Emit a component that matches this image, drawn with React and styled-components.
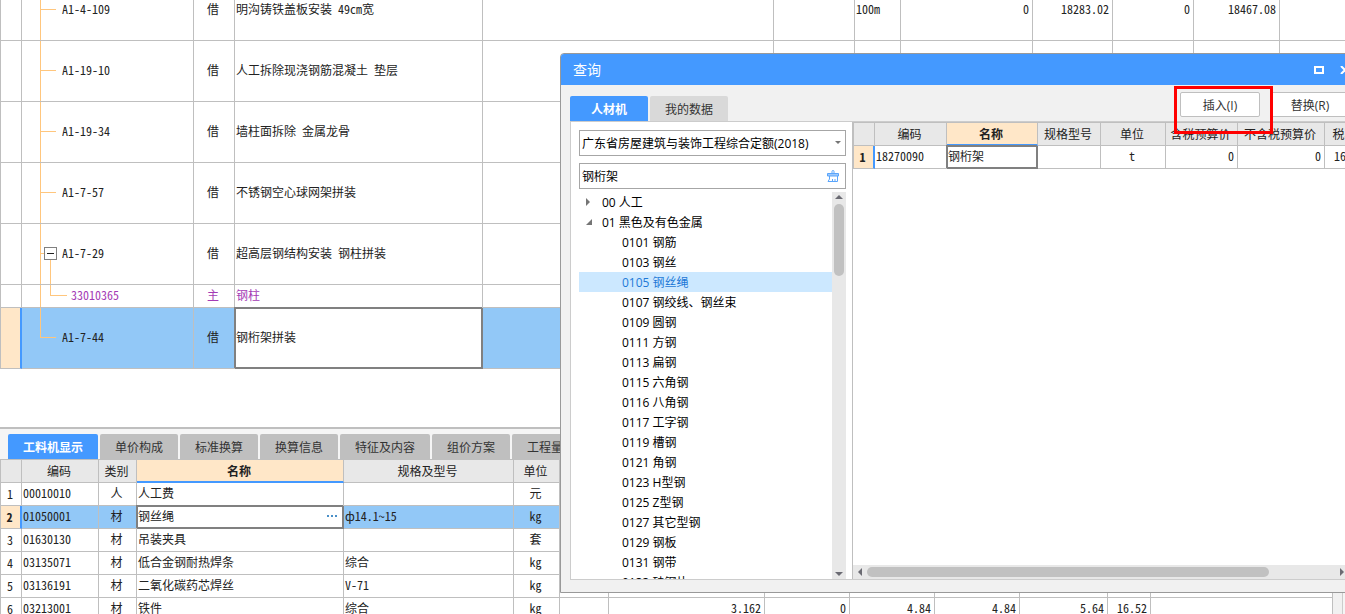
import React from "react";
import styled, { createGlobalStyle } from "styled-components";

const GlobalStyle = createGlobalStyle`
  *, *::after {
    box-sizing: border-box;
  }
  body {
    margin: 0;
    font-family: "Open Sans", "Noto Sans CJK SC", sans-serif;
    font-size: 12px;
    color: #222;
    background: #fff;
  }
  button, input, select {
    margin: 0;
    font: inherit;
    color: inherit;
  }
`;

const Page = styled.div`
  position: relative;
  display: flex;
  flex-direction: column;
  height: 100vh;
  overflow: hidden;
`;
const MainPane = styled.main`
  flex: 1;
  min-height: 0;
  overflow: hidden;
`;

/* grid */
const Grid = styled.table`
  width: ${(props) => props.$width || "100%"};
  margin-top: ${(props) => (props.$scrolled ? "-20px" : "0")};
  table-layout: fixed;
  border-collapse: separate;
  border-spacing: 0;
  font-family: "Noto Sans CJK SC", sans-serif;
  font-feature-settings: "hwid" 1;
  line-height: 18px;
`;
const Col = styled.col`
  width: ${(props) => (props.$w ? `${props.$w}px` : "auto")};
`;
const Row = styled.tr`
  height: ${(props) => (props.$tall ? "61px" : "23px")};
  color: ${(props) => (props.$material ? "#a43bb5" : "#222")};
  background: ${(props) => (props.$selected ? "#92c8f7" : "#fff")};
`;
const HeadCell = styled.th`
  height: 24px;
  padding: 0 2px 0 0;
  border-top: 1px solid #bfbfbf;
  border-right: 1px solid #bfbfbf;
  border-bottom: ${(props) =>
    props.$active ? "2px solid #4499ff" : "1px solid #bfbfbf"};
  background: ${(props) => (props.$active ? "#ffe7c8" : "#e8e8e8")};
  font-weight: ${(props) => (props.$active ? 700 : 400)};
  white-space: nowrap;
  overflow: hidden;

  &:first-child {
    border-left: 1px solid #bfbfbf;
  }
`;
const Cell = styled.td`
  padding: ${(props) => (props.$flush ? "0" : "0 3px 2px 1px")};
  border-right: 1px solid #bfbfbf;
  border-bottom: 1px solid #bfbfbf;
  text-align: ${(props) => props.$align || "left"};
  white-space: nowrap;
  overflow: hidden;

  &:last-child {
    border-right: 0;
  }
`;
const IndexCell = styled.th`
  padding: 0 2px 0 0;
  border-left: 1px solid #bfbfbf;
  border-bottom: 1px solid #bfbfbf;
  border-right: ${(props) =>
    props.$selected ? "2px solid #4499ff" : "1px solid #bfbfbf"};
  background: ${(props) => (props.$selected ? "#ffe7c8" : "#fff")};
  font-weight: ${(props) => (props.$selected ? 700 : 400)};
  text-align: center;
`;
const EditCell = styled.td`
  padding: 0 3px 2px 1px;
  background: #fff;
  border-right: 1px solid #808080;
  border-bottom: 1px solid #808080;
  box-shadow: -1px -1px 0 #808080, inset 0 0 0 1px #808080;
`;
const EditBox = styled.div`
  display: flex;
  align-items: center;
`;
const EditInput = styled.input`
  flex: 1;
  min-width: 0;
  height: 18px;
  padding: 0;
  border: 0;
  outline: 0;
  background: transparent;
`;
const MoreButton = styled.button`
  display: flex;
  align-items: center;
  width: 14px;
  height: 16px;
  padding: 0 1px;
  border: 0;
  background: transparent;
`;

/* tree lines inside the code column */
const CodeBox = styled.div`
  display: flex;
  align-items: center;
  height: ${(props) => (props.$tall ? "60px" : "22px")};
  padding-left: 18px;
`;
const CodeLabel = styled.span`
  padding-bottom: 2px;
`;
const line = "linear-gradient(#ffc67d, #ffc67d)";
const middle = "calc(50% - 1px)";
const Guide = styled.span`
  flex: none;
  align-self: stretch;
  display: flex;
  align-items: center;
  width: ${(props) => (props.$branch === "child" ? "10px" : "22px")};
  padding-bottom: 2px;
  background: ${(props) =>
    ({
      item: `${line} 0 0 / 1px 100% no-repeat, ${line} 0 ${middle} / 16px 1px no-repeat`,
      last: `${line} 0 0 / 1px 50% no-repeat, ${line} 0 ${middle} / 16px 1px no-repeat`,
      child: `${line} 0 0 / 1px 100% no-repeat`,
      parent: `${line} 0 0 / 1px 100% no-repeat, ${line} 0 ${middle} / 4px 1px no-repeat, ${line} 10px 100% / 1px 25px no-repeat`,
    })[props.$branch]};
`;
const SubGuide = styled.span`
  flex: none;
  align-self: stretch;
  width: 21px;
  background: ${line} 0 0 / 1px 50% no-repeat,
    ${line} 0 ${middle} / 17px 1px no-repeat;
`;
const Toggle = styled.button`
  display: flex;
  align-items: center;
  justify-content: center;
  width: 13px;
  height: 13px;
  margin-left: 4px;
  padding: 0;
  border: 1px solid #808080;
  background: #fff;
`;

/* lower pane */
const DetailPane = styled.section`
  flex: none;
  height: 187px;
  border-top: 2px solid #bfbfbf;
  background: #f5f5f5;
  overflow: hidden;
`;
const DetailTabs = styled.div`
  display: flex;
  gap: 2px;
  height: 30px;
  padding: 5px 8px 0;
`;
const Tab = styled.button`
  flex: none;
  height: 25px;
  padding: 0 15px;
  border: 0;
  border-radius: 2px 2px 0 0;
  background: ${(props) =>
    props.$active ? "#4499ff" : props.$light ? "#d9d9d9" : "#bfbfbf"};
  color: ${(props) => (props.$active ? "#fff" : "#333")};
  font-weight: ${(props) => (props.$active ? 700 : 400)};
  white-space: nowrap;
`;
const DialogTab = styled(Tab)`
  width: 78px;
  padding: 0;
`;
const DetailBody = styled.div`
  display: flex;
`;
const GutterBar = styled.div`
  flex: none;
  width: 11px;
  margin-right: 2px;
  border-left: 1px solid #bfbfbf;
  border-right: 1px solid #ccc;
  background: #f1f1f1;
`;

/* query dialog */
const Dialog = styled.section`
  position: absolute;
  top: 53px;
  bottom: 21px;
  left: 560px;
  right: -15px;
  display: flex;
  flex-direction: column;
  border: 1px solid #999;
  border-radius: 4px 4px 0 0;
  background: #f1f1f1;
  overflow: hidden;
`;
const TitleBar = styled.header`
  flex: none;
  display: flex;
  align-items: center;
  gap: 16px;
  height: 31px;
  padding: 0 9px 0 12px;
  background: #4499ff;
  color: #fff;
`;
const Title = styled.h1`
  flex: 1;
  margin: 0;
  font-size: 14px;
  line-height: 20px;
  font-weight: 400;
`;
const WindowButton = styled.button`
  display: flex;
  padding: 0;
  border: 0;
  background: transparent;
`;
const DialogBar = styled.div`
  flex: none;
  display: flex;
  align-items: flex-end;
  gap: 2px;
  height: 36px;
  padding: 0 9px;
`;
const Actions = styled.div`
  display: flex;
  gap: 10px;
  margin-left: auto;
  padding-bottom: 4px;
`;
const ActionButton = styled.button`
  width: 80px;
  height: 25px;
  padding: 0;
  border: 1px solid #bfbfbf;
  border-radius: 2px;
  background: #fff;
  color: #333;
`;
const Highlighted = styled.div`
  position: relative;
  height: 25px;

  &::after {
    content: "";
    position: absolute;
    z-index: 1;
    top: -6px;
    left: -6px;
    width: 99px;
    height: 48px;
    border: 3px solid #f00;
    pointer-events: none;
  }
`;
const DialogBody = styled.div`
  flex: 1;
  min-height: 0;
  display: flex;
  margin: 0 9px 12px;
  border: 1px solid #ccc;
  background: #fff;
`;
const TreePane = styled.aside`
  flex: none;
  display: flex;
  flex-direction: column;
  width: 282px;
  padding: 8px 6px 0 8px;
  border-right: 1px solid #bfbfbf;
  color: #000;
`;
const SelectBox = styled.div`
  display: grid;
  align-items: center;
  margin-bottom: 7px;

  > * {
    grid-area: 1 / 1;
  }
  svg {
    justify-self: end;
    margin-right: 5px;
    pointer-events: none;
  }
`;
const LibrarySelect = styled.select`
  appearance: none;
  width: 100%;
  height: 26px;
  padding: 0 20px 0 2px;
  border: 1px solid #a6a6a6;
  border-radius: 0;
  background: #fff;
`;
const SearchBox = styled.div`
  flex: none;
  display: flex;
  align-items: center;
  height: 26px;
  margin-bottom: 3px;
  padding: 0 6px 0 2px;
  border: 1px solid #a6a6a6;
`;
const TreeScroll = styled.div`
  flex: 1;
  min-height: 0;
  display: flex;
`;
const Tree = styled.ul`
  flex: 1;
  margin: 0;
  padding: 0;
  list-style: none;
  overflow: hidden;
`;
const TreeItem = styled.li`
  display: flex;
  align-items: center;
  height: 20px;
  padding-left: ${(props) => (props.$child ? "43px" : "6px")};
  background: ${(props) => (props.$selected ? "#cce8ff" : "transparent")};
  color: ${(props) => (props.$selected ? "#1e78d7" : "#000")};
  white-space: nowrap;
`;
const TreeArrow = styled.svg`
  width: 8px;
  height: 8px;
  margin-right: 9px;
  fill: #757575;
`;
const VerticalBar = styled.div`
  flex: none;
  display: flex;
  flex-direction: column;
  justify-content: space-between;
  align-items: center;
  width: 14px;
  background: #e8e8e8;
`;
const HorizontalBar = styled.div`
  flex: none;
  display: flex;
  justify-content: space-between;
  align-items: center;
  height: 14px;
  background: #e8e8e8;
`;
const ScrollArrow = styled.svg`
  flex: none;
  width: ${(props) => (props.$wide ? "14px" : "12px")};
  height: 12px;
  fill: #6b6b73;
`;
const VerticalThumb = styled.div`
  width: 10px;
  height: 72px;
  margin-bottom: auto;
  border-radius: 5px;
  background: #c1c1c1;
`;
const HorizontalThumb = styled.div`
  width: 81%;
  height: 10px;
  margin-right: auto;
  border-radius: 5px;
  background: #c1c1c1;
`;
const ResultPane = styled.div`
  flex: 1;
  min-width: 0;
  display: flex;
  flex-direction: column;
`;
const ResultScroll = styled.div`
  flex: 1;
  min-height: 0;
  overflow: hidden;
`;

const quotaColumns = [22, 172, 41, 248, 291, 81, 46, 132, 80, 81, 86, 0];
const quotas = [
  {
    code: "A1-4-109",
    type: "借",
    name: "明沟铸铁盖板安装 49cm宽",
    unit: "100m",
    values: ["0", "18283.02", "0", "18467.08"],
    branch: "item",
  },
  { code: "A1-19-10", type: "借", name: "人工拆除现浇钢筋混凝土 垫层", branch: "item" },
  { code: "A1-19-34", type: "借", name: "墙柱面拆除 金属龙骨", branch: "item" },
  { code: "A1-7-57", type: "借", name: "不锈钢空心球网架拼装", branch: "item" },
  { code: "A1-7-29", type: "借", name: "超高层钢结构安装 钢柱拼装", branch: "parent" },
  { code: "33010365", type: "主", name: "钢柱", branch: "child" },
  { code: "A1-7-44", type: "借", name: "钢桁架拼装", branch: "last", selected: true },
];

const detailTabs = [
  "工料机显示",
  "单价构成",
  "标准换算",
  "换算信息",
  "特征及内容",
  "组价方案",
  "工程量明细",
];
const detailColumns = [22, 77, 38, 207, 170, 46, 49, 156, 85, 85, 85, 88, 43, 0];
const detailHeads = ["", "编码", "类别", "名称", "规格及型号", "单位"];
const details = [
  { code: "00010010", type: "人", name: "人工费", spec: "", unit: "元" },
  { code: "01050001", type: "材", name: "钢丝绳", spec: "ф14.1~15", unit: "kg", selected: true },
  { code: "01630130", type: "材", name: "吊装夹具", spec: "", unit: "套" },
  { code: "03135071", type: "材", name: "低合金钢耐热焊条", spec: "综合", unit: "kg" },
  { code: "03136191", type: "材", name: "二氧化碳药芯焊丝", spec: "V-71", unit: "kg" },
  {
    code: "03213001",
    type: "材",
    name: "铁件",
    spec: "综合",
    unit: "kg",
    values: ["", "3.162", "0", "4.84", "4.84", "5.64", "16.52", ""],
  },
];

const treeItems = [
  "0101 钢筋",
  "0103 钢丝",
  "0105 钢丝绳",
  "0107 钢绞线、钢丝束",
  "0109 圆钢",
  "0111 方钢",
  "0113 扁钢",
  "0115 六角钢",
  "0116 八角钢",
  "0117 工字钢",
  "0119 槽钢",
  "0121 角钢",
  "0123 H型钢",
  "0125 Z型钢",
  "0127 其它型钢",
  "0129 钢板",
  "0131 钢带",
  "0133 硅钢片",
];

const resultColumns = [22, 72, 91, 63, 65, 72, 87, 42];
const resultHeads = [
  "",
  "编码",
  "名称",
  "规格型号",
  "单位",
  "含税预算价",
  "不含税预算价",
  "税率",
];

const Columns = ({ widths }) => (
  <colgroup>
    {widths.map((w, i) => (
      <Col key={i} $w={w} />
    ))}
  </colgroup>
);

const QuotaCode = ({ quota }) => (
  <CodeBox $tall={quota.branch !== "child"}>
    <Guide $branch={quota.branch}>
      {quota.branch === "parent" && (
        <Toggle aria-label="折叠">
          <svg width="7" height="1">
            <rect width="7" height="1" fill="#222" />
          </svg>
        </Toggle>
      )}
    </Guide>
    {quota.branch === "child" && <SubGuide />}
    <CodeLabel>{quota.code}</CodeLabel>
  </CodeBox>
);

const QuotaGrid = () => (
  <Grid $scrolled>
    <Columns widths={quotaColumns} />
    <tbody>
      {quotas.map((quota) => (
        <Row
          key={quota.code}
          $tall={quota.branch !== "child"}
          $material={quota.branch === "child"}
          $selected={quota.selected}
        >
          <IndexCell $selected={quota.selected} />
          <Cell $flush>
            <QuotaCode quota={quota} />
          </Cell>
          <Cell $align="center">{quota.type}</Cell>
          {quota.selected ? (
            <EditCell>
              <EditBox>
                <EditInput aria-label="名称" defaultValue={quota.name} />
              </EditBox>
            </EditCell>
          ) : (
            <Cell>{quota.name}</Cell>
          )}
          <Cell />
          <Cell />
          <Cell>{quota.unit}</Cell>
          {(quota.values || ["", "", "", ""]).map((value, i) => (
            <Cell key={i} $align="right">
              {value}
            </Cell>
          ))}
          <Cell />
        </Row>
      ))}
    </tbody>
  </Grid>
);

const DetailGrid = () => (
  <Grid>
    <Columns widths={detailColumns} />
    <thead>
      <tr>
        {detailColumns.map((w, i) => (
          <HeadCell key={i} $active={detailHeads[i] === "名称"}>
            {detailHeads[i]}
          </HeadCell>
        ))}
      </tr>
    </thead>
    <tbody>
      {details.map((item, index) => (
        <Row key={item.code} $selected={item.selected}>
          <IndexCell $selected={item.selected}>{index + 1}</IndexCell>
          <Cell>{item.code}</Cell>
          <Cell $align="center">{item.type}</Cell>
          {item.selected ? (
            <EditCell>
              <EditBox>
                <EditInput aria-label="名称" defaultValue={item.name} />
                <MoreButton aria-label="更多">
                  <svg width="12" height="2" fill="#4a90c8">
                    <rect width="2" height="2" />
                    <rect x="4" width="2" height="2" />
                    <rect x="8" width="2" height="2" />
                  </svg>
                </MoreButton>
              </EditBox>
            </EditCell>
          ) : (
            <Cell>{item.name}</Cell>
          )}
          <Cell>{item.spec}</Cell>
          <Cell $align="center">{item.unit}</Cell>
          {(item.values || Array(8).fill("")).map((value, i) => (
            <Cell key={i} $align="right">
              {value}
            </Cell>
          ))}
        </Row>
      ))}
    </tbody>
  </Grid>
);

const ResultGrid = () => (
  <Grid $width="514px">
    <Columns widths={resultColumns} />
    <thead>
      <tr>
        {resultHeads.map((head, i) => (
          <HeadCell key={i} $active={head === "名称"}>
            {head}
          </HeadCell>
        ))}
      </tr>
    </thead>
    <tbody>
      <Row>
        <IndexCell $selected>1</IndexCell>
        <Cell>18270090</Cell>
        <EditCell>
          <EditBox>
            <EditInput aria-label="名称" defaultValue="钢桁架" />
          </EditBox>
        </EditCell>
        <Cell />
        <Cell $align="center">t</Cell>
        <Cell $align="right">0</Cell>
        <Cell $align="right">0</Cell>
        <Cell $align="right">16.93</Cell>
      </Row>
    </tbody>
  </Grid>
);

const MaterialTree = () => (
  <TreeScroll>
    <Tree>
      <TreeItem>
        <TreeArrow viewBox="0 0 8 8">
          <path d="M1 0v8l4-4z" />
        </TreeArrow>
        00 人工
      </TreeItem>
      <TreeItem>
        <TreeArrow viewBox="0 0 8 8">
          <path d="M7 1v6H1z" />
        </TreeArrow>
        01 黑色及有色金属
      </TreeItem>
      {treeItems.map((item) => (
        <TreeItem key={item} $child $selected={item.startsWith("0105")}>
          {item}
        </TreeItem>
      ))}
    </Tree>
    <VerticalBar>
      <ScrollArrow viewBox="0 0 12 12">
        <path d="M2 7l4-4 4 4z" />
      </ScrollArrow>
      <VerticalThumb />
      <ScrollArrow viewBox="0 0 12 12">
        <path d="M2 5l4 4 4-4z" />
      </ScrollArrow>
    </VerticalBar>
  </TreeScroll>
);

const QueryDialog = () => (
  <Dialog role="dialog" aria-label="查询">
    <TitleBar>
      <Title>查询</Title>
      <WindowButton aria-label="最大化">
        <svg width="10" height="8" fill="#fff">
          <path fillRule="evenodd" d="M0 0h10v8H0zM2 2v4h6V2z" />
        </svg>
      </WindowButton>
      <WindowButton aria-label="关闭">
        <svg width="10" height="8" stroke="#fff" strokeWidth="2">
          <path d="M1 0l8 8M9 0L1 8" />
        </svg>
      </WindowButton>
    </TitleBar>
    <DialogBar>
      <DialogTab $active>人材机</DialogTab>
      <DialogTab $light>我的数据</DialogTab>
      <Actions>
        <Highlighted>
          <ActionButton>插入(I)</ActionButton>
        </Highlighted>
        <ActionButton>替换(R)</ActionButton>
      </Actions>
    </DialogBar>
    <DialogBody>
      <TreePane>
        <SelectBox>
          <LibrarySelect aria-label="定额库">
            <option>广东省房屋建筑与装饰工程综合定额(2018)</option>
          </LibrarySelect>
          <svg width="6" height="4" fill="#757575">
            <path d="M0 0h6L3 3z" />
          </svg>
        </SelectBox>
        <SearchBox>
          <EditInput aria-label="搜索" defaultValue="钢桁架" />
          <WindowButton aria-label="清除">
            <svg width="12" height="12" fill="none" stroke="#5aa5fb">
              <path d="M5 3V1.500Q5 .5 6 .5T7 1.500V3" />
              <path d="M.5 6V3.500h11V6z" fill="#9cc9fd" />
              <path d="M2.500 6v3L1 11.500h9.500V6M5.500 9v2.500M8 9v2.500" />
            </svg>
          </WindowButton>
        </SearchBox>
        <MaterialTree />
      </TreePane>
      <ResultPane>
        <ResultScroll>
          <ResultGrid />
        </ResultScroll>
        <HorizontalBar>
          <ScrollArrow $wide viewBox="0 0 14 12">
            <path d="M9 2v8L5 6z" />
          </ScrollArrow>
          <HorizontalThumb />
          <ScrollArrow $wide viewBox="0 0 14 12">
            <path d="M5 2v8l4-4z" />
          </ScrollArrow>
        </HorizontalBar>
      </ResultPane>
    </DialogBody>
  </Dialog>
);

const App = () => {
  return (
    <Page>
      <GlobalStyle />
      <MainPane>
        <QuotaGrid />
      </MainPane>
      <DetailPane>
        <DetailTabs>
          {detailTabs.map((tab, i) => (
            <Tab key={tab} $active={i === 0}>
              {tab}
            </Tab>
          ))}
        </DetailTabs>
        <DetailBody>
          <DetailGrid />
          <GutterBar />
        </DetailBody>
      </DetailPane>
      <QueryDialog />
    </Page>
  );
};

export default App;
